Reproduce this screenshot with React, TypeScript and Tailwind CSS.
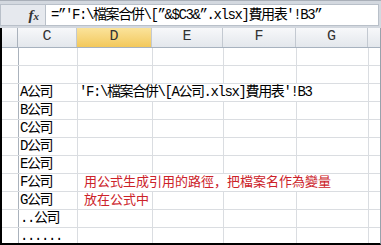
type Row = { c?: string; d?: string; red?: boolean; wide?: boolean };

const rows: Row[] = [
  {},
  {},
  { c: 'A公司', d: "'F:\\檔案合併\\[A公司.xlsx]費用表'!B3", wide: true },
  { c: 'B公司' },
  { c: 'C公司' },
  { c: 'D公司' },
  { c: 'E公司' },
  { c: 'F公司', d: '用公式生成引用的路徑，把檔案名作為變量', red: true, wide: true },
  { c: 'G公司', d: '放在公式中', red: true },
  { c: '..公司' },
  { c: '......' },
];

const grid = 'border-[#dadde1]';

function HeaderCell({ label, w, active }: { label: string; w: string; active?: boolean }) {
  return (
    <div
      className={`${w} shrink-0 border-r border-[#c3c9d1] flex items-center justify-center text-[15px] text-[#333] ${
        active ? 'bg-linear-to-b from-[#fbe39a] to-[#f2c85a]' : 'bg-linear-to-b from-[#f7f8fa] to-[#e3e7ec]'
      }`}
    >
      {label}
    </div>
  );
}

function SheetRow({ row }: { row: Row }) {
  const hide = row.wide ? 'border-r-transparent' : '';
  return (
    <div className={`flex h-[18px] shrink-0 border-b ${grid}`}>
      <div className="w-[17px] shrink-0 border-r border-[#aab2bc]" />
      <div className={`w-[59px] shrink-0 border-r ${grid} pl-[1px] leading-[17px] whitespace-nowrap text-[14px] tracking-[-1.4px] text-black`}>
        {row.c}
      </div>
      <div className={`w-[75px] shrink-0 border-r ${grid} ${hide} whitespace-nowrap overflow-visible`}>
        {row.d && (
          <span
            className={
              row.red
                ? 'block pl-[6px] leading-[17px] text-[13px] text-[#cc2229]'
                : 'block pl-[1px] leading-[17px] text-[14px] tracking-[-1.4px] text-black'
            }
          >
            {row.d}
          </span>
        )}
      </div>
      <div className={`w-[71px] shrink-0 border-r ${grid} ${hide}`} />
      <div className={`w-[73px] shrink-0 border-r ${grid} ${hide}`} />
      <div className={`w-[72px] shrink-0 border-r ${grid}`} />
      <div className="flex-1" />
    </div>
  );
}

export default function App() {
  return (
    <div className="w-[381px] h-[245px] overflow-hidden bg-white flex flex-col font-['Liberation_Mono','Noto_Sans_CJK_SC',monospace]">
      {/* formula bar */}
      <div className="h-[28px] shrink-0 bg-[#d3d8df] border-t border-[#a9afb8] pt-[3px] pb-[2px] pr-[2px]">
        <div className="flex h-full border border-[#b9c0c9]">
          <div className="w-[45px] shrink-0 bg-[#e6e9ee] border-r border-[#b9c0c9] flex items-center justify-end pr-[6px]">
            <span className="font-['Liberation_Serif',serif] italic font-bold text-[15px] text-[#333] leading-none">
              f<span className="text-[11px]">x</span>
            </span>
          </div>
          <div className="flex-1 bg-white pl-[5px] flex items-center whitespace-nowrap text-[14px] tracking-[-1.4px] text-black">
            =”'F:\檔案合併\[”&amp;$C3&amp;”.xlsx]費用表'!B3”
          </div>
        </div>
      </div>

      {/* sheet */}
      <div className="flex-1 flex flex-col min-h-0 overflow-hidden border-l-2 border-b-2 border-black border-r border-r-[#9aa2ac]">
        <div className="flex h-[20px] shrink-0 border-b border-[#a7b2bf]">
          <div className="w-[16px] shrink-0 border-r border-[#aab2bc] bg-linear-to-b from-[#f7f8fa] to-[#e3e7ec]" />
          <HeaderCell label="C" w="w-[59px]" />
          <HeaderCell label="D" w="w-[75px]" active />
          <HeaderCell label="E" w="w-[71px]" />
          <HeaderCell label="F" w="w-[73px]" />
          <HeaderCell label="G" w="w-[72px]" />
          <div className="flex-1 bg-linear-to-b from-[#f7f8fa] to-[#e3e7ec]" />
        </div>
        {rows.map((r, i) => (
          <SheetRow key={i} row={r} />
        ))}
      </div>
    </div>
  );
}
